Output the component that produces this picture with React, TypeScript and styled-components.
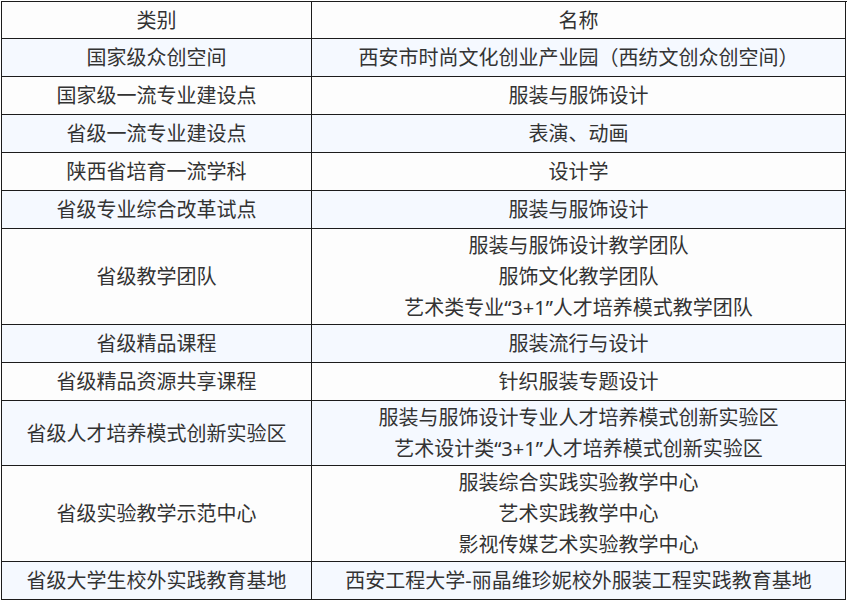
import React from "react";
import styled, { createGlobalStyle } from "styled-components";

const GlobalStyle = createGlobalStyle`
  html, body {
    margin: 0;
    padding: 0;
    background: #ffffff;
  }
  body {
    font-family: "Noto Sans", "Noto Sans CJK SC", sans-serif;
    color: #333333;
  }
`;

type Row = { category: string; names: string[] };

const rows: Row[] = [
  { category: "国家级众创空间", names: ["西安市时尚文化创业产业园（西纺文创众创空间）"] },
  { category: "国家级一流专业建设点", names: ["服装与服饰设计"] },
  { category: "省级一流专业建设点", names: ["表演、动画"] },
  { category: "陕西省培育一流学科", names: ["设计学"] },
  { category: "省级专业综合改革试点", names: ["服装与服饰设计"] },
  {
    category: "省级教学团队",
    names: ["服装与服饰设计教学团队", "服饰文化教学团队", "艺术类专业“3+1”人才培养模式教学团队"],
  },
  { category: "省级精品课程", names: ["服装流行与设计"] },
  { category: "省级精品资源共享课程", names: ["针织服装专题设计"] },
  {
    category: "省级人才培养模式创新实验区",
    names: ["服装与服饰设计专业人才培养模式创新实验区", "艺术设计类“3+1”人才培养模式创新实验区"],
  },
  {
    category: "省级实验教学示范中心",
    names: ["服装综合实践实验教学中心", "艺术实践教学中心", "影视传媒艺术实验教学中心"],
  },
  { category: "省级大学生校外实践教育基地", names: ["西安工程大学-丽晶维珍妮校外服装工程实践教育基地"] },
];

export default function App() {
  return (
    <>
      <GlobalStyle />
      <Page>
        <Table>
          <HeadCell>类别</HeadCell>
          <HeadCell>名称</HeadCell>
          {rows.map((row, index) => (
            <React.Fragment key={row.category}>
              <Cell $striped={index % 2 === 0}>
                <Line>{row.category}</Line>
              </Cell>
              <Cell $striped={index % 2 === 0}>
                {row.names.map((name) => (
                  <Line key={name}>{name}</Line>
                ))}
              </Cell>
            </React.Fragment>
          ))}
        </Table>
      </Page>
    </>
  );
}

const Page = styled.div`
  padding: 1px 0 0 1px;
`;

const Table = styled.div`
  display: grid;
  grid-template-columns: 310px 534px;
  width: 845px;
  border-top: 1px solid #1c1c1c;
  border-left: 1px solid #1c1c1c;
`;

const Cell = styled.div<{ $striped?: boolean }>`
  display: flex;
  flex-direction: column;
  align-items: center;
  justify-content: center;
  min-height: 35px;
  padding: 1px 0;
  box-sizing: content-box;
  border-right: 1px solid #1c1c1c;
  border-bottom: 1px solid #1c1c1c;
  background: ${(p) => (p.$striped ? "#f5f9ff" : "#fdfdfd")};
  font-size: 20px;
  line-height: 31px;
  text-align: center;
`;

const HeadCell = styled(Cell)`
  min-height: 34px;
`;

const Line = styled.div`
  white-space: nowrap;
`;
